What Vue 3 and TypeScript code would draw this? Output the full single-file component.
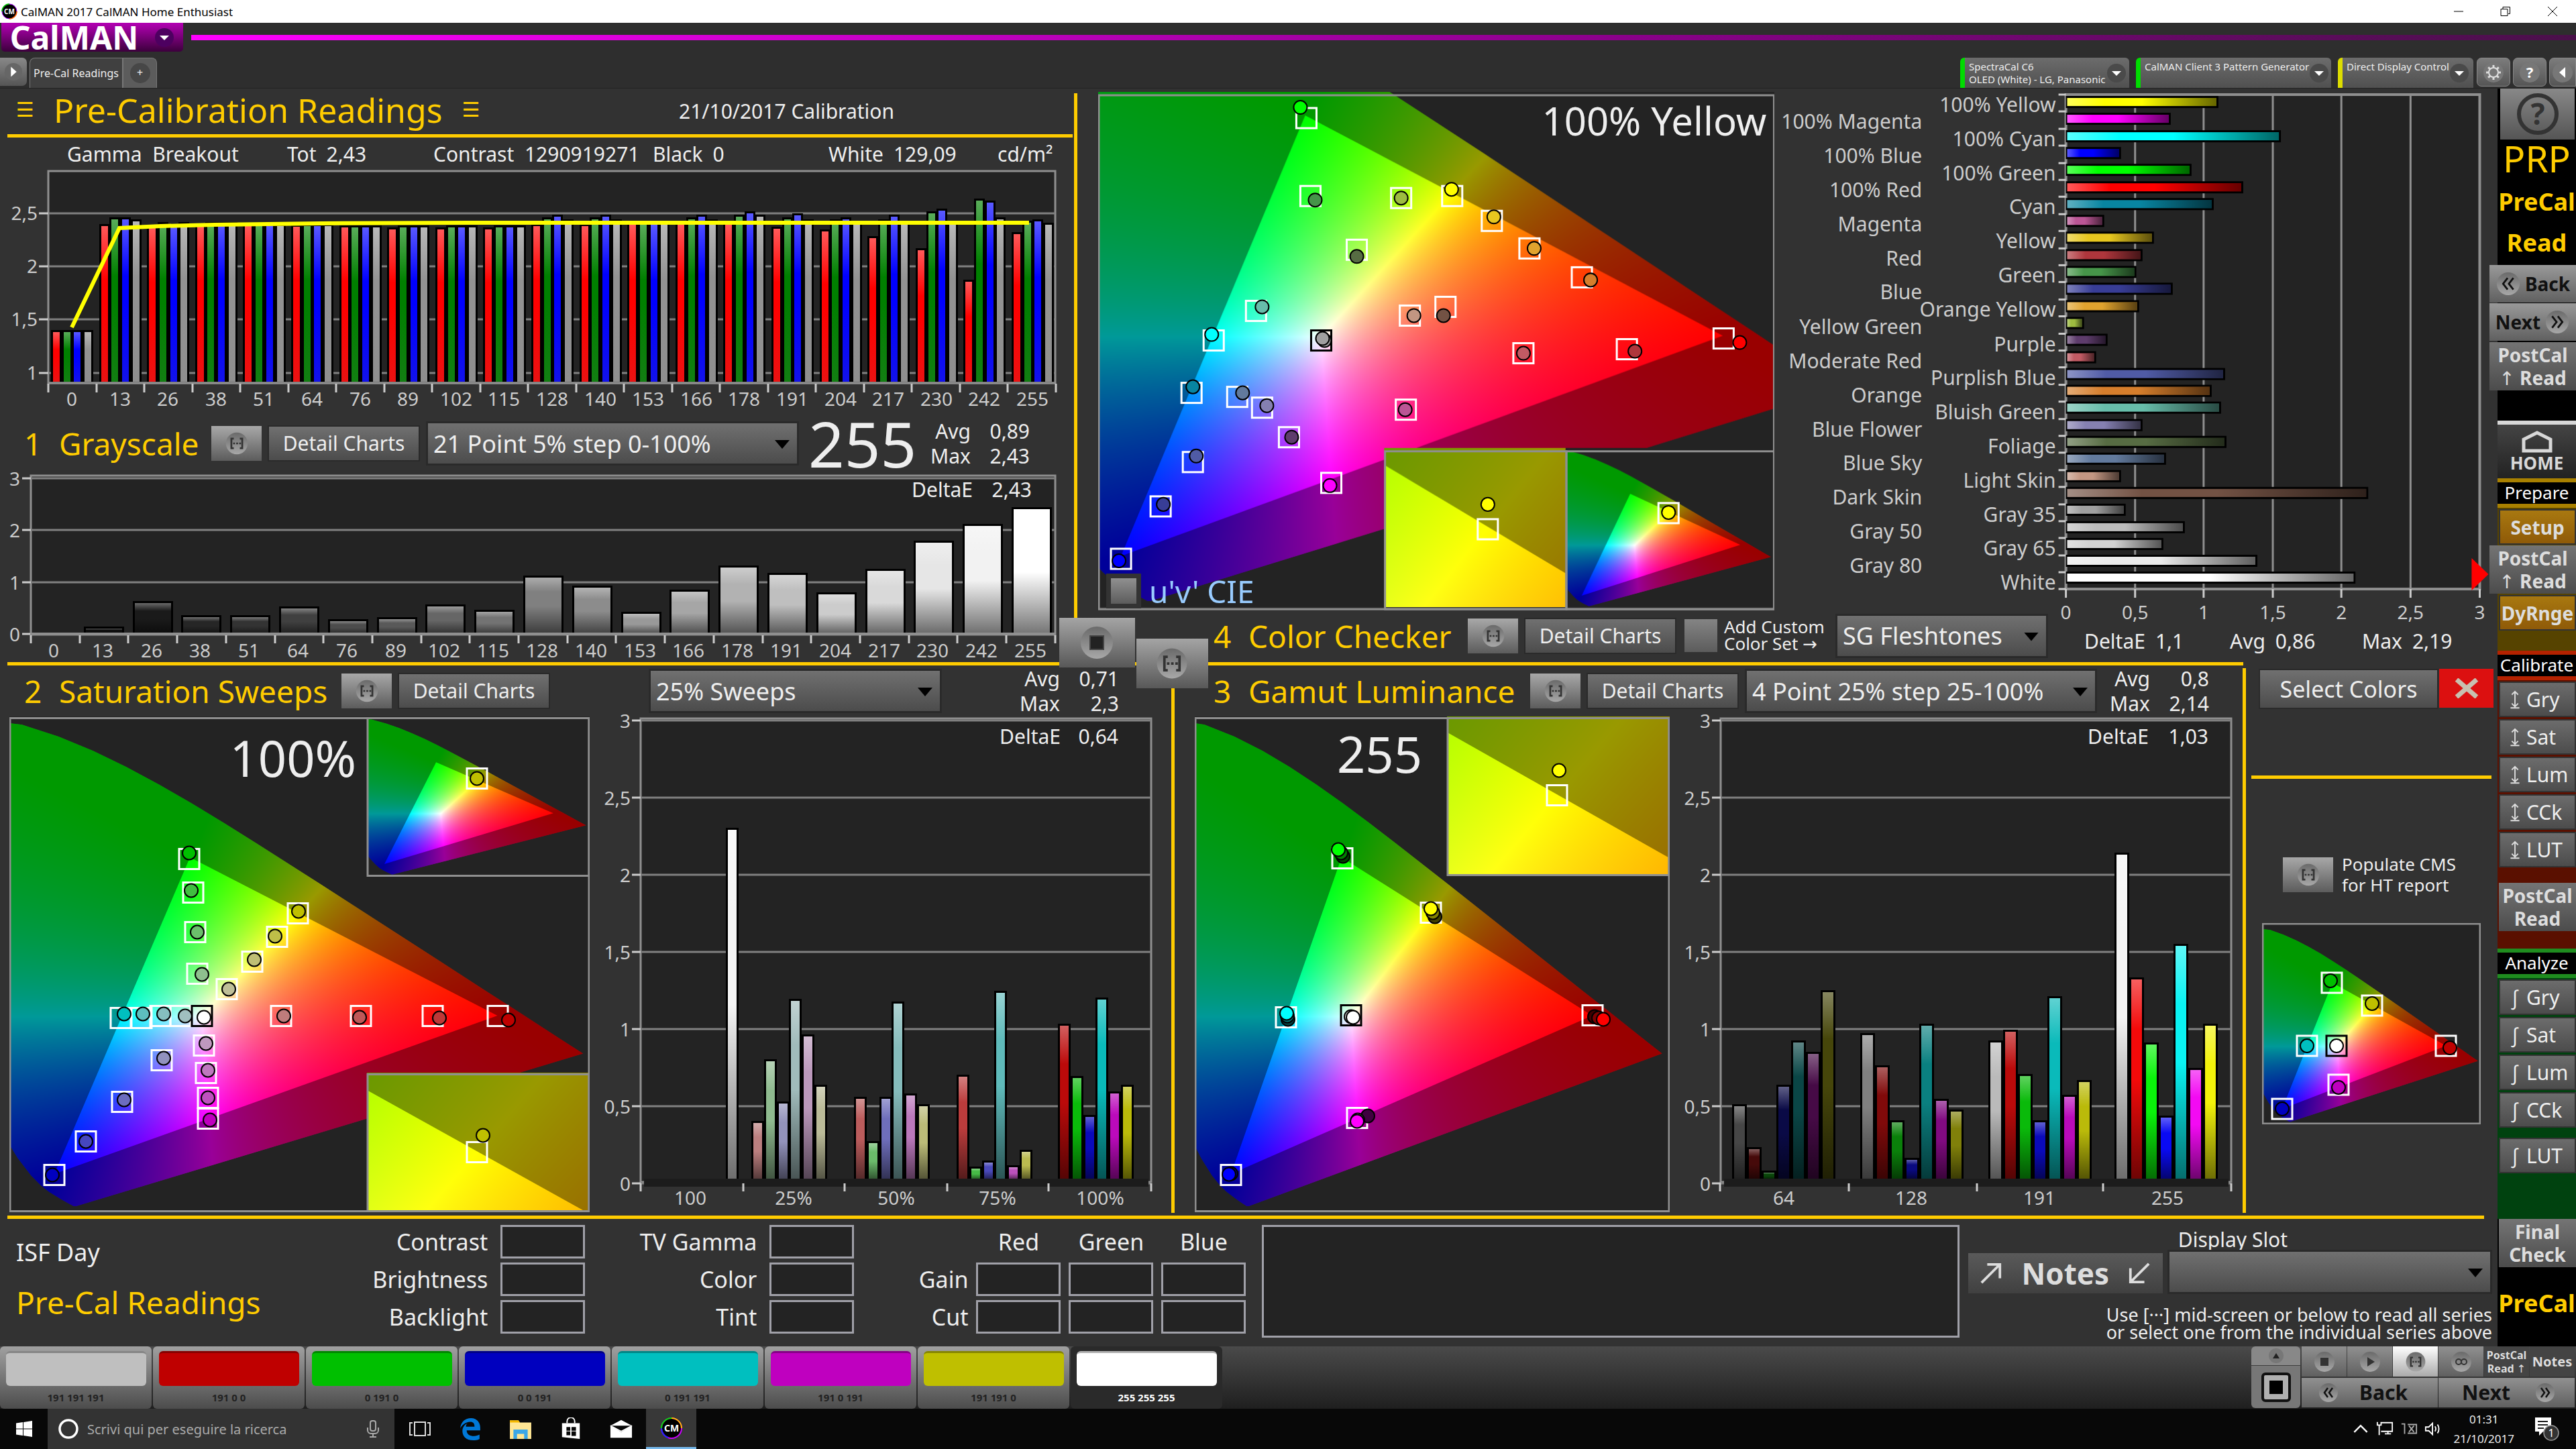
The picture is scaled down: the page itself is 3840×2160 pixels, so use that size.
<script setup lang="ts">
import { defineComponent, h, onMounted, ref } from 'vue'
import type { PropType } from 'vue'

/* ---------- chromaticity diagrams ---------- */
type Point = [number, number]
type Dot = [number, number, string]
interface Field { x: number; y: number; w: number; h: number; at: Point; xy: Point; sx: number; sy: number }
interface Plot { w: number; h: number; fields: Field[]; squares: Point[]; white?: Point; dots: Dot[] }

const BLUE: Point = [0.15, 0.06]
const YELLOW: Point = [0.4193, 0.5053]
const GAMUT: Point[] = [[0.64, 0.33], [0.3, 0.6], BLUE]
const LOCUS: Point[] = [
  [0.1741, 0.005], [0.1714, 0.0051], [0.1644, 0.0109], [0.1566, 0.0177], [0.144, 0.0297], [0.1355, 0.0399],
  [0.1241, 0.0578], [0.1096, 0.0868], [0.0913, 0.1327], [0.0687, 0.2007], [0.0454, 0.295], [0.0235, 0.4127],
  [0.0082, 0.5384], [0.0039, 0.6548], [0.0139, 0.7502], [0.0389, 0.812], [0.0743, 0.8338], [0.1142, 0.8262],
  [0.1547, 0.8059], [0.1929, 0.7816], [0.2296, 0.7543], [0.2658, 0.7243], [0.3016, 0.6923], [0.3373, 0.6589],
  [0.3731, 0.6245], [0.4441, 0.5547], [0.5125, 0.4866], [0.5752, 0.4242], [0.627, 0.3725], [0.6658, 0.334],
  [0.6915, 0.3083], [0.719, 0.2809], [0.7347, 0.2653],
]

function paintField(ctx: CanvasRenderingContext2D, f: Field) {
  const off = document.createElement('canvas')
  off.width = f.w
  off.height = f.h
  const octx = off.getContext('2d')!
  const img = octx.createImageData(f.w, f.h)
  const d = img.data
  for (let j = 0; j < f.h; j++) {
    const y = Math.max(0.001, f.xy[1] + (f.at[1] - (f.y + j)) / f.sy)
    for (let i = 0; i < f.w; i++) {
      const x = f.xy[0] + (f.x + i - f.at[0]) / f.sx
      const X = x / y
      const Z = (1 - x - y) / y
      const r = Math.max(0, 3.2406 * X - 1.5372 - 0.4986 * Z)
      const g = Math.max(0, -0.9689 * X + 1.8758 + 0.0415 * Z)
      const b = Math.max(0, 0.0557 * X - 0.204 + 1.057 * Z)
      const m = Math.max(r, g, b) || 1
      const k = (j * f.w + i) * 4
      d[k] = (255 * r) / m
      d[k + 1] = (255 * g) / m
      d[k + 2] = (255 * b) / m
      d[k + 3] = 255
    }
  }
  octx.putImageData(img, 0, 0)
  const trace = (pts: Point[]) => {
    ctx.beginPath()
    pts.forEach(([px, py], n) => {
      const cx = f.at[0] + (px - f.xy[0]) * f.sx
      const cy = f.at[1] - (py - f.xy[1]) * f.sy
      if (n) ctx.lineTo(cx, cy)
      else ctx.moveTo(cx, cy)
    })
    ctx.closePath()
  }
  ctx.save()
  ctx.beginPath()
  ctx.rect(f.x, f.y, f.w, f.h)
  ctx.clip()
  ctx.fillStyle = '#232323'
  ctx.fillRect(f.x, f.y, f.w, f.h)
  ctx.save()
  trace(LOCUS)
  ctx.clip()
  ctx.drawImage(off, f.x, f.y)
  ctx.fillStyle = 'rgba(0,0,0,0.4)'
  ctx.fillRect(f.x, f.y, f.w, f.h)
  ctx.restore()
  trace(GAMUT)
  ctx.clip()
  ctx.drawImage(off, f.x, f.y)
  ctx.restore()
}

const CiePlot = defineComponent({
  props: { plot: { type: Object as PropType<Plot>, required: true } },
  setup(props, { slots }) {
    const el = ref<HTMLCanvasElement | null>(null)
    onMounted(() => {
      const ctx = el.value?.getContext('2d')
      if (ctx) props.plot.fields.forEach((f) => paintField(ctx, f))
    })
    return () => {
      const p = props.plot
      const square = (c: Point, stroke: string) =>
        h('rect', { x: c[0] - 15, y: c[1] - 15, width: 30, height: 30, fill: 'none', stroke, 'stroke-width': 3 })
      return h('div', { class: 'cie' }, [
        h('canvas', { ref: el, width: p.w, height: p.h, class: 'cie-canvas' }),
        h('svg', { viewBox: `0 0 ${p.w} ${p.h}`, class: 'cie-marks' }, [
          ...p.fields.map((f) => h('rect', { x: f.x + 1, y: f.y + 1, width: f.w - 2, height: f.h - 2, fill: 'none', stroke: '#8f8f8f', 'stroke-width': 3 })),
          ...p.squares.map((s) => square(s, '#fff')),
          p.white ? square(p.white, '#000') : null,
          ...p.dots.map(([x, y, c]) => h('circle', { cx: x, cy: y, r: 10, fill: c, stroke: '#000', 'stroke-width': 2 })),
        ]),
        slots.default ? slots.default() : null,
      ])
    }
  },
})

const checkerPlot: Plot = {
  w: 1007, h: 767,
  fields: [
    { x: 0, y: 0, w: 1007, h: 767, at: [34, 691], xy: BLUE, sx: 1829, sy: 1215 },
    { x: 426, y: 530, w: 272, h: 237, at: [580, 647], xy: YELLOW, sx: 6300, sy: 4740 },
    { x: 696, y: 530, w: 311, h: 237, at: [720, 750], xy: BLUE, sx: 482, sy: 281 },
  ],
  squares: [[310, 35], [316, 151], [451, 154], [527, 151], [586, 188], [642, 229], [720, 272], [385, 231], [235, 322], [172, 366], [464, 329], [517, 316], [633, 385], [787, 379], [931, 363], [139, 444], [207, 450], [244, 466], [458, 469], [284, 510], [141, 547], [347, 578], [93, 613], [34, 691], [580, 647], [849, 623]],
  white: [332, 366],
  dots: [[301, 19, '#0f0'], [323, 157, '#469449'], [451, 154, '#9dbc40'], [526, 141, '#ff0'], [589, 182, '#e7c71f'], [649, 229, '#e0a32e'], [733, 276, '#d67e2c'], [385, 241, '#576c43'], [244, 316, '#67bdaa'], [169, 357, '#0ff'], [470, 329, '#c29682'], [514, 329, '#735244'], [633, 385, '#c15a63'], [799, 382, '#af363c'], [955, 369, '#f00'], [141, 435, '#0885a1'], [215, 444, '#627a9d'], [251, 463, '#8580b1'], [457, 469, '#bb5695'], [288, 510, '#5e3c6c'], [146, 538, '#505ba6'], [345, 582, '#f0f'], [97, 610, '#383d96'], [31, 694, '#00f'], [337, 366, '#999'], [334, 363, '#a0a0a0'], [580, 610, '#ff0'], [849, 622, '#ff0']],
}
const sweepPlot: Plot = {
  w: 865, h: 737,
  fields: [
    { x: 0, y: 0, w: 865, h: 737, at: [67, 682], xy: BLUE, sx: 1348, sy: 874 },
    { x: 533, y: 0, w: 332, h: 237, at: [559, 220], xy: BLUE, sx: 514, sy: 281 },
    { x: 533, y: 531, w: 332, h: 206, at: [697, 648], xy: YELLOW, sx: 6750, sy: 4725 },
  ],
  squares: [[268, 211], [274, 261], [277, 320], [280, 382], [430, 292], [399, 327], [362, 364], [324, 405], [166, 448], [197, 448], [225, 445], [255, 445], [405, 445], [524, 445], [631, 445], [728, 445], [227, 511], [290, 489], [293, 530], [296, 567], [296, 598], [168, 573], [114, 632], [67, 682], [697, 91], [697, 648]],
  white: [287, 445],
  dots: [[268, 202, '#00bf00'], [271, 258, '#40bf40'], [280, 320, '#6bbf6b'], [287, 383, '#8ebf8e'], [431, 289, '#bfbf00'], [396, 326, '#bfbf48'], [365, 361, '#bfbf75'], [327, 405, '#bfbf98'], [171, 442, '#00bfbf'], [199, 442, '#5dbfbf'], [230, 442, '#85bfbf'], [262, 445, '#a0bfbf'], [290, 447, '#fff'], [409, 445, '#bf7c7c'], [522, 447, '#bf5858'], [641, 448, '#bf3838'], [744, 451, '#bf0000'], [230, 508, '#9292bf'], [293, 486, '#bf98bf'], [296, 526, '#bf78bf'], [296, 567, '#bf50bf'], [299, 600, '#bf00bf'], [171, 570, '#6c6cbf'], [114, 632, '#4646bf'], [64, 682, '#0000bf'], [697, 91, '#bfbf00'], [706, 623, '#bfbf00']],
}
const gamutPlot: Plot = {
  w: 708, h: 737,
  fields: [
    { x: 0, y: 0, w: 708, h: 737, at: [54, 682], xy: BLUE, sx: 1099, sy: 874 },
    { x: 376, y: 0, w: 332, h: 236, at: [540, 116], xy: YELLOW, sx: 6750, sy: 4810 },
  ],
  squares: [[220, 210], [352, 291], [136, 447], [593, 444], [242, 597], [54, 682], [540, 116]],
  white: [233, 444],
  dots: [[221, 207, '#004000'], [218, 202, '#008000'], [214, 197, '#0f0'], [358, 297, '#404000'], [355, 291, '#808000'], [352, 285, '#ff0'], [139, 450, '#004040'], [138, 445, '#008080'], [137, 441, '#0ff'], [596, 446, '#400000'], [602, 448, '#800000'], [609, 450, '#f00'], [258, 594, '#400040'], [243, 600, '#fff'], [242, 602, '#f0f'], [54, 680, '#000080'], [51, 681, '#00f'], [233, 446, '#fff'], [236, 447, '#fff'], [543, 79, '#ff0']],
}
const cmsPlot: Plot = {
  w: 326, h: 300,
  fields: [{ x: 0, y: 0, w: 326, h: 300, at: [30, 277], xy: BLUE, sx: 499, sy: 348 }],
  squares: [[104, 89], [164, 123], [67, 183], [274, 183], [114, 241], [30, 277]],
  white: [111, 183],
  dots: [[102, 86, '#00bf00'], [164, 120, '#bfbf00'], [67, 183, '#00bfbf'], [280, 186, '#bf0000'], [114, 245, '#bf00bf'], [30, 277, '#0000bf'], [111, 183, '#fff']],
}

/* ---------- bar charts ---------- */
const levels = [0, 13, 26, 38, 51, 64, 76, 89, 102, 115, 128, 140, 153, 166, 178, 191, 204, 217, 230, 242, 255]
const gamma: number[][] = [
  [1.4, 1.4, 1.4, 1.4], [2.4, 2.46, 2.46, 2.44], [2.38, 2.42, 2.39, 2.42], [2.39, 2.42, 2.42, 2.42], [2.4, 2.41, 2.4, 2.4],
  [2.39, 2.4, 2.4, 2.4], [2.385, 2.385, 2.385, 2.385], [2.365, 2.385, 2.385, 2.385], [2.365, 2.385, 2.385, 2.385],
  [2.365, 2.385, 2.385, 2.385], [2.4, 2.46, 2.485, 2.44], [2.4, 2.46, 2.485, 2.44], [2.41, 2.41, 2.41, 2.41],
  [2.41, 2.46, 2.485, 2.44], [2.41, 2.485, 2.52, 2.485], [2.37, 2.46, 2.5, 2.44], [2.345, 2.44, 2.46, 2.41],
  [2.285, 2.44, 2.485, 2.41], [2.17, 2.52, 2.54, 2.42], [1.875, 2.64, 2.62, 2.46], [2.325, 2.43, 2.44, 2.41],
]
const rgbw = ['#f00', '#008000', '#00f', '#929292']
const gammaBars = gamma.flatMap((g, i) => g.map((v, c) => {
  const y = Math.round(305 - (v - 1) * 158.8)
  return { x: Math.round(76 + i * 71.6 + c * 15.7), y, h: 318 - y, fill: rgbw[c] }
}))
const gammaGrid = [{ y: 67, t: '2,5' }, { y: 146, t: '2' }, { y: 225, t: '1,5' }, { y: 305, t: '1' }]

const gray = [0, 0.16, 0.65, 0.37, 0.37, 0.54, 0.29, 0.33, 0.58, 0.48, 1.13, 0.94, 0.44, 0.86, 1.33, 1.18, 0.81, 1.26, 1.81, 2.13, 2.45]
const grayBars = gray.map((v, i) => {
  const hgt = Math.round(v * 77.6)
  return { x: Math.round(52 + i * 72.8), y: 240 - hgt, h: hgt, fill: `rgb(${levels[i]},${levels[i]},${levels[i]})` }
}).filter((b) => b.h > 0)
const grayGrid = [{ y: 7, t: '3' }, { y: 84, t: '2' }, { y: 162, t: '1' }, { y: 239, t: '0' }]

const checker: [string, number, string][] = [
  ['100% Yellow', 1.105, '#ff0'], ['100% Magenta', 0.76, '#f0f'], ['100% Cyan', 1.56, '#0ff'], ['100% Blue', 0.4, '#00f'],
  ['100% Green', 0.91, '#0f0'], ['100% Red', 1.29, '#f00'], ['Cyan', 1.075, '#0885a1'], ['Magenta', 0.28, '#bb5695'],
  ['Yellow', 0.64, '#e7c71f'], ['Red', 0.555, '#af363c'], ['Green', 0.51, '#469449'], ['Blue', 0.775, '#383d96'],
  ['Orange Yellow', 0.53, '#e0a32e'], ['Yellow Green', 0.13, '#9dbc40'], ['Purple', 0.3, '#5e3c6c'], ['Moderate Red', 0.22, '#c15a63'],
  ['Purplish Blue', 1.155, '#505ba6'], ['Orange', 1.06, '#d67e2c'], ['Bluish Green', 1.125, '#67bdaa'], ['Blue Flower', 0.555, '#8580b1'],
  ['Foliage', 1.165, '#576c43'], ['Blue Sky', 0.725, '#627a9d'], ['Light Skin', 0.4, '#c29682'], ['Dark Skin', 2.195, '#735244'],
  ['Gray 35', 0.435, '#a0a0a0'], ['Gray 50', 0.865, '#bcbcbc'], ['Gray 65', 0.705, '#d2d2d2'], ['Gray 80', 1.39, '#ebebeb'], ['White', 2.1, '#fff'],
]
const checkerRows = checker.map(([t, v, fill], i) => ({
  t, fill, y: Math.round(11 + i * 25.3), w: Math.round(v * 205), lx: i % 2 ? 220 : 419, ly: Math.round(35 + i * 25.4), ty: Math.round(9 + i * 25.4),
}))
const checkerAxis = ['0', '0,5', '1', '1,5', '2', '2,5', '3'].map((t, i) => ({ t, x: Math.round(434 + i * 102.6) }))

const deltaGrid = ['3', '2,5', '2', '1,5', '1', '0,5', '0'].map((t, i) => ({ t, y: Math.round(6 + i * 115) }))
const groups = (start: number[], pitch: number, values: number[][], colors: string[][]) =>
  values.flatMap((vs, g) => vs.map((v, i) => {
    const y = Math.round(695 - v * 230)
    return { x: Math.round(start[g] + i * pitch), y, h: 690 - y, fill: colors[g][i] }
  }))
const sweepBars = groups([193, 231, 384, 537, 688], 18.8,
  [[2.3], [0.4, 0.8, 0.525, 1.19, 0.96, 0.635], [0.555, 0.27, 0.555, 1.175, 0.58, 0.51], [0.7, 0.105, 0.145, 1.245, 0.115, 0.215], [1.03, 0.69, 0.44, 1.2, 0.59, 0.635]],
  [['#f4f4f4'], ['#bb7f7f', '#8fbb8f', '#9292bb', '#a0bbbb', '#bb98bb', '#bbbb98'], ['#bb5c5c', '#6bbb6b', '#6e6ebb', '#85bbbb', '#bb78bb', '#bbbb78'],
    ['#bb3c3c', '#46bb46', '#4a4abb', '#5fbbbb', '#bb50bb', '#bbbb50'], ['#bb0a0a', '#0abb0a', '#0a0abb', '#0abbbb', '#bb0abb', '#bbbb0a']])
const sweepTicks = [66, 219, 370, 523, 674, 827]
const sweepLabels = [{ x: 140, t: '100' }, { x: 294, t: '25%' }, { x: 447, t: '50%' }, { x: 598, t: '75%' }, { x: 751, t: '100%' }]

const ramp = (n: number) => [[n, n, n], [n, 10, 10], [10, n, 10], [10, 10, n], [10, n, n], [n, 10, n], [n, n, 10]].map((c) => `rgb(${c})`)
const gamutBars = groups([93, 284, 475, 663], 22,
  [[0.51, 0.23, 0.08, 0.635, 0.92, 0.85, 1.25], [0.97, 0.76, 0.405, 0.16, 1.03, 0.545, 0.475], [0.92, 0.99, 0.705, 0.405, 1.21, 0.57, 0.665], [2.14, 1.33, 0.91, 0.435, 1.55, 0.745, 1.03]],
  [ramp(70), ramp(128), ramp(186), ramp(243)])
const gamutTicks = [75, 267, 458, 646, 837]
const gamutLabels = [{ x: 170, t: '64' }, { x: 360, t: '128' }, { x: 551, t: '191' }, { x: 742, t: '255' }]

/* ---------- bottom strip ---------- */
const swatches = [
  { c: '#bfbfbf', t: '191 191 191' }, { c: '#bf0000', t: '191 0 0' }, { c: '#00bf00', t: '0 191 0' }, { c: '#0000bf', t: '0 0 191' },
  { c: '#00bfbf', t: '0 191 191' }, { c: '#bf00bf', t: '191 0 191' }, { c: '#bfbf00', t: '191 191 0' }, { c: '#ffffff', t: '255 255 255' },
]
const selected = ref(7)
const series = ['Gry', 'Sat', 'Lum', 'CCk', 'LUT']
</script>

<template>
  <div class="app">
    <svg class="defs" aria-hidden="true">
      <defs>
        <linearGradient id="shadeV" x1="0" y1="0" x2="0" y2="1">
          <stop offset="0" stop-color="#fff" stop-opacity=".35" /><stop offset=".25" stop-color="#fff" stop-opacity="0" />
          <stop offset=".5" stop-color="#000" stop-opacity="0" /><stop offset="1" stop-color="#000" stop-opacity=".55" />
        </linearGradient>
        <linearGradient id="shadeH" x1="0" y1="0" x2="1" y2="0">
          <stop offset="0" stop-color="#fff" stop-opacity=".35" /><stop offset=".25" stop-color="#fff" stop-opacity="0" />
          <stop offset=".5" stop-color="#000" stop-opacity="0" /><stop offset="1" stop-color="#000" stop-opacity=".6" />
        </linearGradient>
        <linearGradient id="shadeG" x1="0" y1="0" x2="0" y2="1">
          <stop offset="0" stop-color="#fff" stop-opacity=".35" /><stop offset=".35" stop-color="#fff" stop-opacity="0" />
          <stop offset=".5" stop-color="#777" stop-opacity="0" /><stop offset="1" stop-color="#777" stop-opacity=".15" />
        </linearGradient>
        <linearGradient id="disc" x1="0" y1="0" x2="0" y2="1">
          <stop offset="0" stop-color="#6a6a6a" /><stop offset="1" stop-color="#a8a8a8" />
        </linearGradient>
        <symbol id="range" viewBox="0 0 40 40">
          <circle cx="20" cy="20" r="18" fill="url(#disc)" />
          <path d="M15 12h-4v16h4M25 12h4v16h-4" fill="none" stroke="#333" stroke-width="3" />
          <path d="M14 20h3M19 20h3M24 20h3" stroke="#333" stroke-width="3" />
        </symbol>
        <symbol id="updown" viewBox="0 0 16 32">
          <path d="M8 3v24M3 8l5-5 5 5M3 22l5 5 5-5M1 29h14" fill="none" stroke="#ddd" stroke-width="2" />
        </symbol>
      </defs>
    </svg>

    <header class="titlebar">
      <svg class="cm-icon" viewBox="0 0 24 24"><circle cx="12" cy="12" r="11" fill="#000" stroke="#a0f" stroke-width="1" /><path d="M1 12A11 11 0 0 1 12 1" fill="none" stroke="#0c0" stroke-width="1.5" /><path d="M23 12A11 11 0 0 1 12 23" fill="none" stroke="#f60" stroke-width="1.5" /><text x="12" y="16" text-anchor="middle" font-size="10" font-weight="700" fill="#fff">CM</text></svg>
      <span class="win-title">CalMAN 2017 CalMAN Home Enthusiast</span>
      <span class="win-buttons">
        <button aria-label="Minimize"><svg viewBox="0 0 16 16"><path d="M1 8h14" stroke="#000" /></svg></button>
        <button aria-label="Restore"><svg viewBox="0 0 16 16"><path d="M1 4.500h10v10H1zM4 4V1.500h10.500v10H12" fill="none" stroke="#000" /></svg></button>
        <button aria-label="Close"><svg viewBox="0 0 16 16"><path d="M1 1l14 14M15 1L1 15" stroke="#000" /></svg></button>
      </span>
    </header>

    <div class="brandbar">
      <button class="brand">CalMAN<svg viewBox="0 0 30 30"><circle cx="15" cy="15" r="14" fill="#4d0060" /><path d="M8 12h14l-7 7z" fill="#fff" /></svg></button>
      <span class="brand-line"></span>
    </div>

    <div class="tabbar">
      <button class="expand" aria-label="Expand"><svg viewBox="0 0 32 32"><circle cx="16" cy="16" r="14" fill="#666" /><path d="M12 8l9 8-9 8z" fill="#fff" /></svg></button>
      <button class="tab">Pre-Cal Readings</button>
      <button class="tab add"><span>+</span></button>
      <span class="grow"></span>
      <button class="device meter"><span>SpectraCal C6<br />OLED (White) - LG, Panasonic</span><svg viewBox="0 0 30 30"><circle cx="15" cy="15" r="14" fill="#4a4a4a" /><path d="M8 12h14l-7 7z" fill="#fff" /></svg></button>
      <button class="device source"><span>CalMAN Client 3 Pattern Generator</span><svg viewBox="0 0 30 30"><circle cx="15" cy="15" r="14" fill="#4a4a4a" /><path d="M8 12h14l-7 7z" fill="#fff" /></svg></button>
      <button class="device display"><span>Direct Display Control</span><svg viewBox="0 0 30 30"><circle cx="15" cy="15" r="14" fill="#4a4a4a" /><path d="M8 12h14l-7 7z" fill="#fff" /></svg></button>
      <button class="tool" aria-label="Settings"><svg viewBox="0 0 32 32"><circle cx="16" cy="16" r="15" fill="#777" /><circle cx="16" cy="16" r="7" fill="none" stroke="#ddd" stroke-width="2" /><g stroke="#ddd" stroke-width="3"><path v-for="a in 8" :key="a" d="M16 5v3.500" :transform="`rotate(${a * 45} 16 16)`" /></g></svg></button>
      <button class="tool" aria-label="Help"><svg viewBox="0 0 32 32"><circle cx="16" cy="16" r="15" fill="#777" /><text x="16" y="24" text-anchor="middle" font-size="22" font-weight="700" fill="#fff">?</text></svg></button>
      <button class="tool last" aria-label="Collapse"><svg viewBox="0 0 32 32"><circle cx="16" cy="16" r="15" fill="#777" /><path d="M20 8l-9 8 9 8z" fill="#fff" /></svg></button>
    </div>

    <div class="work">
      <main class="main">
        <section class="top">
          <div class="gray-panel">
            <div class="titlerow"><h1><span class="burger">☰</span>Pre-Calibration Readings<span class="burger">☰</span></h1><span class="session">21/10/2017 Calibration</span></div>
            <div class="rule left"></div>
            <div class="facts">
              <span>Gamma&nbsp; Breakout</span><span>Tot&ensp;2,43</span><span class="contrast">Contrast&nbsp; 1290919271</span><span>Black&ensp;0</span><span>White&ensp;129,09</span><span>cd/m²</span>
            </div>
            <svg class="chart" viewBox="0 0 1601 370">
              <rect x="72" y="4" width="1501" height="316" fill="#232323" stroke="#8f8f8f" stroke-width="3" />
              <g v-for="g in gammaGrid" :key="g.t"><path :d="`M72 ${g.y}H1573`" stroke="#808080" stroke-width="3" /><path :d="`M58 ${g.y}H72`" stroke="#ccc" stroke-width="3" /><text x="56" :y="g.y + 10" text-anchor="end">{{ g.t }}</text></g>
              <g v-for="(b, i) in gammaBars" :key="i"><rect :x="b.x" :y="b.y" width="16" :height="b.h" fill="#000" /><rect :x="b.x + 3" :y="b.y + 3" width="10" :height="b.h - 3" :fill="b.fill" /><rect :x="b.x + 3" :y="b.y + 3" width="10" :height="b.h - 3" fill="url(#shadeG)" /></g>
              <path d="M107 237L178 89 240 86 320 84 480 82 700 81 1534 81" fill="none" stroke="#ff0" stroke-width="6" />
              <path d="M72 320H1574" stroke="#8f8f8f" stroke-width="3" />
              <path v-for="i in 22" :key="i" :d="`M${Math.round(72 + (i - 1) * 71.5)} 321v13`" stroke="#ccc" stroke-width="3" />
              <text v-for="(l, i) in levels" :key="l" :x="Math.round(107 + i * 71.6)" y="354" text-anchor="middle">{{ l }}</text>
            </svg>
            <div class="head">
              <h2 class="w-gray"><b>1</b>Grayscale</h2>
              <button class="icon-btn" aria-label="Read series"><svg><use href="#range" /></svg></button>
              <button class="btn">Detail Charts</button>
              <span class="select gray-select"><select aria-label="Grayscale series"><option>21 Point 5% step 0-100%</option></select></span>
              <span class="level">255</span>
              <span class="stats"><i>Avg</i><i>0,89</i><i>Max</i><i>2,43</i></span>
            </div>
            <svg class="chart" viewBox="0 0 1601 281">
              <rect x="46" y="3" width="1527" height="237" fill="#232323" stroke="#8f8f8f" stroke-width="3" />
              <g v-for="g in grayGrid" :key="g.t"><path :d="`M46 ${g.y}H1573`" stroke="#808080" stroke-width="3" /><path :d="`M33 ${g.y}H46`" stroke="#ccc" stroke-width="3" /><text x="30" :y="g.y + 11" text-anchor="end">{{ g.t }}</text></g>
              <g v-for="(b, i) in grayBars" :key="i"><rect :x="b.x" :y="b.y" width="60" :height="b.h" fill="#000" /><rect :x="b.x + 3" :y="b.y + 3" width="54" :height="b.h - 3" :fill="b.fill" /><rect :x="b.x + 3" :y="b.y + 3" width="54" :height="b.h - 3" fill="url(#shadeV)" /></g>
              <path d="M45 239H1574" stroke="#8f8f8f" stroke-width="4" />
              <path v-for="i in 22" :key="i" :d="`M${Math.round(46 + (i - 1) * 72.7)} 241v12`" stroke="#ccc" stroke-width="3" />
              <text v-for="(l, i) in levels" :key="l" :x="Math.round(80 + i * 72.8)" y="274" text-anchor="middle">{{ l }}</text>
              <text class="bright" x="1450" y="35" text-anchor="end">DeltaE</text><text class="bright" x="1538" y="35" text-anchor="end">2,43</text>
            </svg>
          </div>
          <div class="vrule first"></div>
          <div class="checker-panel">
            <div class="checker-body">
              <CiePlot :plot="checkerPlot"><span class="plot-title">100% Yellow</span><label class="uv"><input type="checkbox" /><span>u'v' CIE</span></label></CiePlot>
              <svg class="chart checker-chart" viewBox="0 0 1076 780">
                <rect x="434" y="9" width="616" height="736" fill="#232323" stroke="#8f8f8f" stroke-width="4" />
                <g v-for="a in checkerAxis" :key="a.t"><path :d="`M${a.x} 9V745`" stroke="#8f8f8f" stroke-width="3" /><path :d="`M${a.x} 745v13`" stroke="#ccc" stroke-width="3" /><text :x="a.x" y="790" text-anchor="middle" class="small">{{ a.t }}</text></g>
                <g v-for="r in checkerRows" :key="r.y"><text :x="r.lx" :y="r.ly" text-anchor="end">{{ r.t }}</text><path :d="`M423 ${r.ty}h11`" stroke="#ccc" stroke-width="3" /><rect x="434" :y="r.y" :width="r.w" height="18" fill="#000" /><rect x="436" :y="r.y + 3" :width="r.w - 5" height="12" :fill="r.fill" /><rect x="436" :y="r.y + 3" :width="r.w - 5" height="12" fill="url(#shadeH)" /></g>
                <path d="M423 745h11" stroke="#ccc" stroke-width="3" />
                <path d="M1038 699l25 24-25 24z" fill="#f00" />
              </svg>
            </div>
            <div class="head checker-head">
              <h2 class="w-checker"><b>4</b>Color Checker</h2>
              <button class="icon-btn" aria-label="Read series"><svg><use href="#range" /></svg></button>
              <button class="btn">Detail Charts</button>
              <button class="mini-btn" aria-label="Add custom color set"></button>
              <span class="custom">Add Custom<br />Color Set <span class="arrow">→</span></span>
              <span class="select flesh-select"><select aria-label="Custom color set"><option>SG Fleshtones</option></select></span>
              <span class="line-stats"><span>DeltaE&ensp;1,1</span><span>Avg&ensp;0,86</span><span>Max&ensp;2,19</span></span>
            </div>
          </div>
        </section>

        <div class="rule mid"></div>

        <section class="bottom">
          <div class="pane">
            <div class="head">
              <h2 class="w-sat"><b>2</b>Saturation Sweeps</h2>
              <button class="icon-btn" aria-label="Read series"><svg><use href="#range" /></svg></button>
              <button class="btn">Detail Charts</button>
              <span class="grow"></span>
              <span class="select sweep-select"><select aria-label="Sweep series"><option>25% Sweeps</option></select></span>
              <span class="stats sweep-stats"><i>Avg</i><i>0,71</i><i>Max</i><i>2,3</i></span>
            </div>
            <div class="pane-body sweep-body">
              <CiePlot :plot="sweepPlot"><span class="plot-title sweep">100%</span></CiePlot>
              <svg class="chart" viewBox="0 0 857 740">
                <rect x="66" y="3" width="761" height="691" fill="#232323" stroke="#8f8f8f" stroke-width="3" />
                <g v-for="g in deltaGrid" :key="g.t"><path :d="`M66 ${g.y}H827`" stroke="#808080" stroke-width="3" /><path :d="`M53 ${g.y}H66`" stroke="#ccc" stroke-width="3" /><text x="51" :y="g.y + 11" text-anchor="end">{{ g.t }}</text></g>
                <g v-for="(b, i) in sweepBars" :key="i"><rect :x="b.x" :y="b.y" width="19" :height="b.h" fill="#000" /><rect :x="b.x + 3" :y="b.y + 3" width="13" :height="b.h - 3" :fill="b.fill" /><rect :x="b.x + 3" :y="b.y + 3" width="13" :height="b.h - 3" fill="url(#shadeV)" /></g>
                <rect x="71" y="689" width="752" height="12" fill="#1c1c1c" />
                <path v-for="x in sweepTicks" :key="x" :d="`M${x} 696v12`" stroke="#ccc" stroke-width="3" />
                <text v-for="l in sweepLabels" :key="l.t + l.x" :x="l.x" y="728" text-anchor="middle">{{ l.t }}</text>
                <text class="bright" x="692" y="41" text-anchor="end">DeltaE</text><text class="bright" x="778" y="41" text-anchor="end">0,64</text>
              </svg>
            </div>
          </div>
          <div class="vrule"></div>
          <div class="pane">
            <div class="head">
              <h2 class="w-gamut"><b>3</b>Gamut Luminance</h2>
              <button class="icon-btn" aria-label="Read series"><svg><use href="#range" /></svg></button>
              <button class="btn">Detail Charts</button>
              <span class="select gamut-select"><select aria-label="Gamut series"><option>4 Point 25% step 25-100%</option></select></span>
              <span class="grow"></span>
              <span class="stats gamut-stats"><i>Avg</i><i>0,8</i><i>Max</i><i>2,14</i></span>
            </div>
            <div class="pane-body gamut-body">
              <CiePlot :plot="gamutPlot"><span class="plot-title gamut">255</span></CiePlot>
              <svg class="chart" viewBox="0 0 854 740">
                <rect x="76" y="3" width="761" height="691" fill="#232323" stroke="#8f8f8f" stroke-width="3" />
                <g v-for="g in deltaGrid" :key="g.t"><path :d="`M76 ${g.y}H837`" stroke="#808080" stroke-width="3" /><path :d="`M63 ${g.y}H76`" stroke="#ccc" stroke-width="3" /><text x="61" :y="g.y + 11" text-anchor="end">{{ g.t }}</text></g>
                <g v-for="(b, i) in gamutBars" :key="i"><rect :x="b.x" :y="b.y" width="22" :height="b.h" fill="#000" /><rect :x="b.x + 3" :y="b.y + 3" width="16" :height="b.h - 3" :fill="b.fill" /><rect :x="b.x + 3" :y="b.y + 3" width="16" :height="b.h - 3" fill="url(#shadeV)" /></g>
                <rect x="81" y="689" width="752" height="12" fill="#1c1c1c" />
                <path v-for="x in gamutTicks" :key="x" :d="`M${x} 696v12`" stroke="#ccc" stroke-width="3" />
                <text v-for="l in gamutLabels" :key="l.t" :x="l.x" y="728" text-anchor="middle">{{ l.t }}</text>
                <text class="bright" x="714" y="41" text-anchor="end">DeltaE</text><text class="bright" x="803" y="41" text-anchor="end">1,03</text>
              </svg>
            </div>
          </div>
          <div class="vrule"></div>
          <div class="cms">
            <div class="cms-head"><button class="btn colors">Select Colors</button><button class="close" aria-label="Close"><svg viewBox="0 0 36 30"><path d="M3 2l30 26M33 2L3 28" stroke="#c8c0b0" stroke-width="7" /></svg></button></div>
            <div class="rule cms-rule"></div>
            <div class="cms-report"><button class="icon-btn" aria-label="Populate CMS"><svg><use href="#range" /></svg></button><span>Populate CMS<br />for HT report</span></div>
            <CiePlot :plot="cmsPlot" />
          </div>
        </section>

        <div class="rule low"></div>

        <section class="info">
          <div class="mode"><p>ISF Day</p><p class="gold">Pre-Cal Readings</p></div>
          <div class="form"><label for="f1">Contrast</label><input id="f1" /><label for="f2">Brightness</label><input id="f2" /><label for="f3">Backlight</label><input id="f3" /></div>
          <div class="form"><label for="f4">TV Gamma</label><input id="f4" /><label for="f5">Color</label><input id="f5" /><label for="f6">Tint</label><input id="f6" /></div>
          <div class="form rgb">
            <span></span><span class="col">Red</span><span class="col">Green</span><span class="col">Blue</span>
            <span>Gain</span><input aria-label="Red gain" /><input aria-label="Green gain" /><input aria-label="Blue gain" />
            <span>Cut</span><input aria-label="Red cut" /><input aria-label="Green cut" /><input aria-label="Blue cut" />
          </div>
          <textarea class="notes" aria-label="Notes"></textarea>
          <div class="slot">
            <button class="notes-btn"><svg viewBox="0 0 36 36"><path d="M3 33L32 4M12 4h20v22" fill="none" stroke="#ddd" stroke-width="4" /></svg>Notes<svg viewBox="0 0 36 36"><path d="M33 3L4 32M4 10v22h22" fill="none" stroke="#ddd" stroke-width="4" /></svg></button>
            <div class="slot-pick"><label for="slot">Display Slot</label><span class="select"><select id="slot"></select></span></div>
            <p>Use [···] mid-screen or below to read all series<br />or select one from the individual series above</p>
          </div>
        </section>

        <button class="float stop" aria-label="Stop"><svg viewBox="0 0 50 50"><circle cx="25" cy="25" r="24" fill="url(#disc)" /><rect x="15" y="15" width="20" height="20" fill="#222" stroke="#444" stroke-width="2" /></svg></button>
        <button class="float read" aria-label="Read all series"><svg><use href="#range" /></svg></button>
      </main>

      <aside class="side">
        <button class="help" aria-label="Help"><svg viewBox="0 0 64 64"><circle cx="32" cy="32" r="28" fill="none" stroke="#333" stroke-width="6" /><text x="32" y="48" text-anchor="middle" font-size="44" font-weight="700" fill="#333">?</text></svg></button>
        <div class="labels"><span class="prp">PRP</span><span>PreCal</span><span>Read</span></div>
        <button class="nav"><svg viewBox="0 0 40 40"><circle cx="20" cy="20" r="18" fill="url(#disc)" /><path d="M19 11l-7 9 7 9M28 11l-7 9 7 9" fill="none" stroke="#111" stroke-width="3" /></svg>Back</button>
        <button class="nav">Next<svg viewBox="0 0 40 40"><circle cx="20" cy="20" r="18" fill="url(#disc)" /><path d="M12 11l7 9-7 9M21 11l7 9-7 9" fill="none" stroke="#111" stroke-width="3" /></svg></button>
        <button class="post wide"><span>PostCal<br /><span class="arrow">↑</span> Read</span></button>
        <div class="gap"></div>
        <button class="home"><svg viewBox="0 0 48 34"><path d="M4 31V14L24 4l20 10v17z" fill="none" stroke="#d8d8d8" stroke-width="5" /></svg>HOME</button>
        <div class="group amber">Prepare</div>
        <div class="zone amber-zone"><button class="gold-btn">Setup</button><button class="post wide"><span>PostCal<br /><span class="arrow">↑</span> Read</span></button><button class="gold-btn">DyRnge</button></div>
        <div class="group red">Calibrate</div>
        <div class="zone red-zone"><button v-for="s in series" :key="s" class="item"><svg><use href="#updown" /></svg>{{ s }}</button><button class="post">PostCal<br />Read</button></div>
        <div class="group green">Analyze</div>
        <div class="zone green-zone"><button v-for="s in series" :key="s" class="item" :class="{ lut: s === 'LUT' }"><span>∫</span>{{ s }}</button></div>
        <button class="post final">Final<br />Check</button>
        <div class="tail">PreCal</div>
      </aside>
    </div>

    <footer class="strip">
      <button v-for="(s, i) in swatches" :key="s.t" class="swatch" :class="{ on: selected === i }" @click="selected = i"><span class="chip" :style="{ background: s.c }"></span>{{ s.t }}</button>
      <span class="grow"></span>
      <div class="shutter"><button aria-label="Up"><svg viewBox="0 0 24 24"><circle cx="12" cy="12" r="11" fill="#777" /><path d="M7 16l5-8 5 8z" fill="#222" /></svg></button><button aria-label="Pattern window" class="pattern"><svg viewBox="0 0 46 46"><rect x="3" y="3" width="40" height="40" rx="4" fill="#b0b0b0" stroke="#111" stroke-width="4" /><rect x="13" y="13" width="20" height="20" fill="#000" /></svg></button></div>
      <div class="transport">
        <button aria-label="Stop"><svg viewBox="0 0 32 32"><circle cx="16" cy="16" r="15" fill="url(#disc)" /><rect x="10" y="10" width="12" height="12" fill="#333" /></svg></button>
        <button aria-label="Play"><svg viewBox="0 0 32 32"><circle cx="16" cy="16" r="15" fill="url(#disc)" /><path d="M12 9l11 7-11 7z" fill="#333" /></svg></button>
        <button class="lit" aria-label="Read series"><svg><use href="#range" /></svg></button>
        <button aria-label="Continuous"><svg viewBox="0 0 32 32"><circle cx="16" cy="16" r="15" fill="url(#disc)" /><g fill="none" stroke="#333" stroke-width="2"><circle cx="12" cy="16" r="4" /><circle cx="20" cy="16" r="4" /></g></svg></button>
        <button class="dark"><span>PostCal<br />Read <span class="arrow">↑</span></span></button>
        <button class="dark big">Notes</button>
        <button class="step"><svg viewBox="0 0 32 32"><circle cx="16" cy="16" r="14" fill="url(#disc)" /><path d="M15 9l-5 7 5 7M22 9l-5 7 5 7" fill="none" stroke="#111" stroke-width="2.500" /></svg><span>Back</span></button>
        <button class="step next"><span>Next</span><svg viewBox="0 0 32 32"><circle cx="16" cy="16" r="14" fill="url(#disc)" /><path d="M10 9l5 7-5 7M17 9l5 7-5 7" fill="none" stroke="#111" stroke-width="2.500" /></svg></button>
      </div>
    </footer>

    <nav class="taskbar">
      <button class="task start" aria-label="Start"><svg viewBox="0 0 24 24"><path d="M0 3.500l10-1.400v9.400H0zM11 2l13-2v11.500H11zM0 12.500h10v9.400L0 20.500zM11 12.500h13V24l-13-2z" fill="#fff" /></svg></button>
      <label class="search"><svg viewBox="0 0 32 32"><circle cx="16" cy="16" r="13" fill="none" stroke="#fff" stroke-width="3.500" /></svg><input placeholder="Scrivi qui per eseguire la ricerca" /><svg class="mic" viewBox="0 0 20 28"><rect x="6" y="2" width="8" height="15" rx="3" fill="none" stroke="#aaa" stroke-width="2" /><path d="M2 12v4a5 5 0 0 0 5 5h6a5 5 0 0 0 5-5v-4M10 21v5M5 26h10" fill="none" stroke="#aaa" stroke-width="2" /></svg></label>
      <button class="task view" aria-label="Task view"><svg viewBox="0 0 32 24"><path d="M5 3H1v18h4M27 3h4v18h-4" fill="none" stroke="#ddd" stroke-width="2" /><rect x="8" y="2" width="16" height="20" fill="none" stroke="#ddd" stroke-width="2" /></svg></button>
      <button class="task" aria-label="Edge"><svg viewBox="0 0 32 32"><path d="M2 15C3 6 9 1 17 1c9 0 13 7 13 13v4H11c0 6 5 8 10 8 3 0 6-1 8-2v6c-3 2-6 2-9 2C10 32 5 26 5 19c0-5 3-9 7-11-2 2-2 4-2 5h12c0-5-2-7-6-7C9 6 4 11 2 15z" fill="#0078d7" /></svg></button>
      <button class="task" aria-label="Explorer"><svg viewBox="0 0 32 30"><path d="M1 3h12l2 3h16v23H1z" fill="#ffe694" /><path d="M1 3h12l2 3H1z" fill="#f5b800" /><path d="M6 29V16h20v13h-5v-7H11v7z" fill="#3aa7e8" /></svg></button>
      <button class="task" aria-label="Store"><svg viewBox="0 0 32 36"><path d="M2 9h28v25l-28-3z" fill="#fff" /><path d="M10 9V6a6 6 0 0 1 12 0v3" fill="none" stroke="#fff" stroke-width="2" /><path d="M9 15h6v6H9zM17 15h7v6h-7zM9 22h6v6H9zM17 22h7v7h-7z" fill="#080808" /></svg></button>
      <button class="task" aria-label="Mail"><svg viewBox="0 0 36 30"><path d="M1 10L18 1l17 9v19H1z" fill="#fff" /><path d="M1 10h34L18 20z" fill="#080808" /><path d="M1 10l17 9 17-9" fill="none" stroke="#fff" stroke-width="2" /></svg></button>
      <button class="task active" aria-label="CalMAN"><svg viewBox="0 0 34 34"><circle cx="17" cy="17" r="15" fill="#000" stroke="#c0f" stroke-width="2" /><path d="M2 17A15 15 0 0 1 17 2" fill="none" stroke="#0d0" stroke-width="2" /><path d="M17 2A15 15 0 0 1 32 17" fill="none" stroke="#fb0" stroke-width="2" /><path d="M2 17a15 15 0 0 0 10 14" fill="none" stroke="#22f" stroke-width="2" /><text x="17" y="22" text-anchor="middle" font-size="14" font-weight="700" fill="#fff">CM</text></svg></button>
      <span class="grow"></span>
      <span class="tray">
        <svg viewBox="0 0 20 20"><path d="M2 14l8-8 8 8" fill="none" stroke="#fff" stroke-width="2" /></svg>
        <svg viewBox="0 0 28 24"><path d="M8 2h18v14H8M14 20h10M19 16v4M2 1v5h6V1M5 6v16" fill="none" stroke="#fff" stroke-width="2" /></svg>
        <svg viewBox="0 0 28 24"><path d="M2 4h5v16M12 5h14v14H12M14 7l8 10M22 7l-8 10" fill="none" stroke="#aaa" stroke-width="2" /></svg>
        <svg viewBox="0 0 28 24"><path d="M2 9h5l6-6v18l-6-6H2zM17 8c2 3 2 5 0 8M21 5c3 4 3 10 0 14" fill="none" stroke="#fff" stroke-width="2" /></svg>
        <time>01:31<br />21/10/2017</time>
        <svg class="bell" viewBox="0 0 38 36"><path d="M1 1h24v21H13l-6 6v-6H1z" fill="#fff" /><path d="M5 7h15M5 12h15M5 17h9" stroke="#222" stroke-width="2" /><circle cx="25" cy="24" r="11" fill="#333" stroke="#999" stroke-width="1.500" /><text x="25" y="30" text-anchor="middle" font-size="16" fill="#fff">1</text></svg>
      </span>
    </nav>
  </div>
</template>

<style>
body { background: #323232; }
.cie { position: relative; }
.cie-canvas { display: block; width: 100%; height: auto; }
.cie-marks { position: absolute; inset: 0; width: 100%; height: 100%; }
</style>

<style scoped>
.app { display: flex; flex-direction: column; min-height: 100vh; font-family: "Noto Sans", "Open Sans", sans-serif; color: #eee; background: #323232; font-size: 30px; line-height: 1; }
.app * { box-sizing: border-box; }
.defs { position: absolute; width: 0; height: 0; }
button { border: 0; padding: 0; margin: 0; font: inherit; color: inherit; cursor: pointer; display: flex; align-items: center; justify-content: center; }
button, svg { flex: none; }
h1, h2, p { margin: 0; font-weight: 400; }
.grow { flex: 1; }
.arrow { font-family: "DejaVu Sans", sans-serif; font-weight: 400; line-height: 1; }

.titlebar { display: flex; align-items: center; height: 34px; background: #fff; color: #000; font-size: 17px; }
.cm-icon { width: 24px; height: 24px; margin: 0 5px 0 2px; }
.win-title { flex: 1; }
.win-buttons { display: flex; }
.win-buttons button { width: 70px; height: 34px; background: none; }
.win-buttons svg { width: 16px; height: 16px; }

.brandbar { display: flex; align-items: flex-start; height: 52px; background: #2e2e2e; }
.brand { width: 271px; height: 43px; margin-left: 2px; border-radius: 0 0 5px 5px; background: linear-gradient(#b400b4, #3c003c); color: #fff; font: 700 48px/43px "Noto Sans", sans-serif; gap: 24px; }
.brand svg { width: 30px; height: 30px; }
.brand-line { flex: 1; height: 8px; margin: 18px 0 0 12px; background: linear-gradient(90deg, #ff00ff, #8a008a 60%, #4a104a); }

.tabbar { display: flex; align-items: flex-end; height: 46px; background: #2e2e2e; border-bottom: 1px solid #222; font-size: 16px; }
.expand { width: 40px; height: 42px; margin: 0 4px 3px 0; background: linear-gradient(#888, #555); border-radius: 0 7px 7px 0; }
.expand svg { width: 30px; height: 30px; }
.tab { width: 139px; height: 45px; background: #404040; border: 1px solid #777; border-bottom: 0; border-radius: 8px 0 0 0; }
.add { width: 51px; background: #5c5c5c; border-radius: 0 8px 0 0; }
.add span { width: 30px; height: 30px; line-height: 28px; border-radius: 50%; background: #474747; }
.device { height: 45px; margin-right: 10px; border-left: 7px solid #0d0; border-radius: 6px 6px 0 0; background: linear-gradient(#6c6c6c, #505050); font-size: 15px; line-height: 19px; text-align: left; justify-content: space-between; padding: 0 8px 0 6px; align-items: flex-start; }
.device span { white-space: nowrap; padding-top: 4px; }
.device svg { width: 30px; height: 30px; margin-top: 8px; }
.meter { width: 252px; padding-right: 4px; }
.source { width: 291px; }
.display { width: 202px; border-color: #dd0; margin-right: 5px; }
.tool { width: 50px; height: 43px; margin: 0 4px 2px 0; border-radius: 7px; background: linear-gradient(#7c7c7c, #555); border: 1px solid #888; }
.tool svg { width: 32px; height: 32px; }
.last { width: 40px; margin-right: 0; border-radius: 7px 0 0 7px; }

.work { display: grid; grid-template-columns: minmax(0, 1fr) 117px; flex: 1; }
.main { position: relative; background: #323232; }
.rule { height: 5px; background: #fc0; }
.left { margin: 0 2px 0 11px; }
.mid { margin: 0 379px 0 11px; }
.low { margin: 0 20px 0 11px; }
.vrule { background: #fc0; margin: 4px 0; }
.vrule.first { margin: 7px 0 0; }

.top { display: grid; grid-template-columns: minmax(0, 1601fr) 5px minmax(0, 2117fr); }
.titlerow { display: flex; align-items: center; height: 68px; padding-bottom: 4px; }
.titlerow h1 { display: flex; gap: 29px; align-items: center; margin-left: 24px; color: #fc0; font-size: 50px; white-space: nowrap; }
.burger { font: 30px/40px "DejaVu Sans", sans-serif; }
.session { margin: 4px 268px 0 auto; white-space: nowrap; }
.facts { display: grid; grid-template-columns: 328px 218px 327px 262px 252px 1fr; height: 46px; align-items: center; margin-left: 100px; padding-top: 3px; white-space: nowrap; line-height: 36px; }
.contrast { overflow: hidden; width: 315px; }
.chart { display: block; width: 100%; height: auto; overflow: visible; }
.chart text { font-size: 28px; fill: #ccc; }
.checker-chart text { font-size: 30px; }
.checker-chart .small { font-size: 28px; }
.chart .bright { font-size: 30px; fill: #eee; }

.head { display: flex; align-items: center; }
.gray-panel .head { height: 85px; padding-bottom: 5px; }
h2 { display: flex; color: #fc0; font-size: 46px; white-space: nowrap; padding-left: 36px; }
h2 b { width: 52px; font-weight: 400; }
.w-gray { width: 315px; }
.w-sat { width: 509px; }
.w-gamut { width: 530px; padding-left: 58px; }
.w-checker { width: 582px; padding-left: 203px; }
.icon-btn { width: 75px; height: 52px; margin-right: 9px; background: linear-gradient(#a8a8a8, #5c5c5c); }
.icon-btn svg { width: 36px; height: 36px; }
.btn { width: 227px; height: 54px; background: linear-gradient(#707070, #4c4c4c); border: 2px solid #2a2a2a; }
.select { position: relative; display: block; height: 66px; }
.select::after { content: ""; position: absolute; right: 14px; top: 28px; width: 22px; height: 13px; background: #000; clip-path: polygon(0 0, 100% 0, 50% 100%); }
select { appearance: none; width: 100%; height: 100%; padding: 0 8px; border: 3px solid #2a2a2a; border-radius: 0; background: linear-gradient(#707070, #4c4c4c); color: #eee; font: 36px "Noto Sans", sans-serif; }
.gray-select { width: 556px; margin-left: 9px; }
.level { margin-left: 14px; width: 160px; font-size: 94px; line-height: 76px; }
.stats { display: grid; grid-template-columns: auto 88px; line-height: 37px; text-align: right; }
.stats i { font-style: normal; }
.gray-panel .stats { width: 170px; grid-template-columns: 82px 88px; }

.checker-panel { padding: 5px 0 0 31px; }
.checker-body { display: grid; grid-template-columns: minmax(0, 1008fr) minmax(0, 1077fr); margin-bottom: -5px; }
.checker-body .chart { margin-top: -5px; }
.plot-title { position: absolute; top: 8px; right: 12px; font-size: 58px; line-height: 70px; }
.plot-title.sweep { right: 348px; top: 22px; font-size: 74px; line-height: 80px; }
.plot-title.gamut { right: 369px; top: 16px; font-size: 74px; line-height: 80px; }
.uv { position: absolute; left: 12px; bottom: 6px; display: flex; align-items: center; gap: 12px; color: #9cf; font-size: 46px; line-height: 50px; }
.uv input { appearance: none; width: 52px; height: 52px; margin: 0; background: linear-gradient(#909090, #5c5c5c); border: 7px solid #333; }
.checker-head { height: 79px; margin-left: -31px; }
.mini-btn { width: 49px; height: 49px; margin-left: 12px; background: linear-gradient(#848484, #5c5c5c); }
.custom { width: 166px; margin-left: 10px; font-size: 26px; line-height: 25px; white-space: nowrap; }
.flesh-select { width: 317px; }
.line-stats { display: grid; grid-template-columns: 217px 197px 150px; margin: 16px 0 0 54px; white-space: nowrap; }

.bottom { display: grid; grid-template-columns: minmax(0, 1746fr) 5px minmax(0, 1592fr) 5px minmax(0, 375fr); height: 820px; }
.pane .head { height: 76px; }
.pane-body { display: grid; }
.sweep-body { grid-template-columns: minmax(0, 865fr) minmax(0, 867fr); padding-left: 14px; }
.sweep-body .chart { padding-left: 10px; }
.gamut-body { grid-template-columns: minmax(0, 708fr) minmax(0, 854fr); padding-left: 30px; }
.sweep-select { width: 437px; }
.sweep-stats { width: 264px; margin-right: 78px; grid-template-columns: 1fr 88px; }
.gamut-select { width: 525px; margin-left: 9px; }
.gamut-stats { width: 156px; margin-right: 50px; grid-template-columns: 1fr 88px; }
.cms { padding: 5px 6px 0 19px; }
.cms-head { display: flex; gap: 1px; }
.colors { width: 268px; height: 60px; font-size: 34px; }
.close { flex: 1; height: 58px; background: #dc1010; }
.close svg { width: 36px; height: 30px; }
.cms-rule { margin: 99px 3px 0 -11px; }
.cms-report { display: flex; margin: 117px 0 0 36px; align-items: center; line-height: 31px; height: 52px; gap: 4px; font-size: 26px; white-space: nowrap; }
.cms .cie { width: 326px; margin: 46px 0 0 5px; }

.info { display: grid; grid-template-columns: 500fr 372fr 401fr 584fr 1063fr 802fr; height: 190px; }
.mode { padding: 24px 0 0 24px; font-size: 36px; }
.mode p { height: 52px; line-height: 52px; }
.mode .gold { margin-top: 22px; color: #fc0; font-size: 46px; }
.form { display: grid; grid-template-columns: 1fr 126px; grid-auto-rows: 50px; gap: 6px 19px; padding-top: 9px; text-align: right; line-height: 50px; font-size: 34px; white-space: nowrap; }
.rgb { grid-template-columns: 1fr 126px 126px 126px; column-gap: 12px; }
.col { text-align: center; }
input, textarea { border: 3px solid #a0a0a8; background: #232323; border-radius: 0; margin: 0; min-width: 0; color: #eee; }
.notes { margin: 9px 0 13px 24px; resize: none; }
.slot { display: grid; grid-template-columns: 290px 1fr; column-gap: 7px; padding: 12px 8px 0 13px; align-content: start; }
.notes-btn { height: 60px; margin-top: 39px; background: linear-gradient(#5a5a5a, #404040); font-size: 44px; font-weight: 700; color: #ddd; gap: 28px; }
.notes-btn svg { width: 34px; height: 34px; }
.slot-pick label { display: block; height: 34px; line-height: 38px; margin-left: 16px; }
.slot p { grid-column: 1 / 3; text-align: right; font-size: 27px; line-height: 26px; margin-top: 18px; white-space: nowrap; }

.float { position: absolute; height: 74px; width: 113px; background: linear-gradient(#a4a4a4, #585858); }
.stop { left: 42.4%; top: 789px; }
.read { left: 45.5%; top: 820px; width: 107px; }
.float svg { width: 50px; height: 50px; }

.side { display: flex; flex-direction: column; background: #000; color: #fc0; text-align: center; z-index: 1; font-weight: 700; }
.side > * { flex-shrink: 0; }
.help { height: 76px; margin: 0 2px 0 4px; background: linear-gradient(#888, #555); }
.help svg { width: 64px; height: 64px; }
.labels { display: flex; flex-direction: column; align-items: center; height: 187px; font-size: 36px; line-height: 61px; }
.labels .prp { font-weight: 400; font-size: 55px; line-height: 56px; margin-bottom: 6px; }
.nav { height: 56px; margin: 0 0 1px -12px; background: linear-gradient(#999, #606060); color: #111; font-size: 28px; gap: 6px; }
.nav svg { width: 38px; height: 38px; }
.post { height: 72px; background: linear-gradient(#747474, #4c4c4c); color: #ddd; font-size: 28px; line-height: 34px; margin: 0 0 0 2px; }
.post.wide { margin: 1px 0 2px -12px; }
.gap { height: 43px; }
.home { flex-direction: column; height: 86px; border-top: 6px solid #d8d8d8; background: linear-gradient(#444, #222); color: #d8d8d8; font-size: 26px; line-height: 30px; }
.home svg { width: 48px; height: 34px; }
.group { height: 44px; border: solid; border-width: 6px 0; background: #000; color: #fff; font-weight: 400; font-size: 26px; line-height: 31px; }
.amber { border-color: #a88000; }
.red { border-color: #b42200; }
.green { border-color: #1f8c1f; }
.zone { display: flex; flex-direction: column; padding-top: 2px; }
.amber-zone { height: 213px; background: #564300; }
.red-zone { height: 400px; background: #5a1000; }
.green-zone { height: 359px; background: #00420f; }
.gold-btn { height: 53px; margin-left: 2px; background: linear-gradient(#a87810, #8f5a08); border: 2px solid #333; color: #ddd; font-size: 28px; }
.item { height: 53px; margin: 0 0 3px 2px; background: linear-gradient(#6c6c6c, #4c4c4c); border: 2px solid #333; color: #eee; font-weight: 400; justify-content: flex-start; padding-left: 14px; gap: 9px; }
.item span, .item svg { width: 16px; height: 30px; }
.red-zone .post { margin-top: 20px; }
.item.lut { margin-bottom: 0; }
.green-zone .lut { margin-top: 12px; }
.tail { display: flex; flex: 1; justify-content: center; font-size: 36px; line-height: 108px; }

.strip { display: flex; height: 93px; background: linear-gradient(#4a4a4a, #1f1f1f); }
.swatch { width: 226px; margin-right: 2px; flex-direction: column; justify-content: flex-start; padding: 7px 7px 0; background: linear-gradient(#a0a0a0, #4c4c4c); border-radius: 6px; color: #222; font-size: 15px; font-weight: 700; line-height: 34px; }
.swatch.on { background: #2a2a2a; color: #fff; }
.chip { width: 209px; height: 55px; border-radius: 6px; border-top: 3px solid rgb(0 0 0 / 30%); }
.shutter { width: 73px; margin-right: 2px; display: flex; flex-direction: column; }
.shutter button { height: 28px; background: #888; border-radius: 6px 6px 0 0; }
.shutter svg { width: 24px; height: 24px; }
.shutter .pattern { height: 63px; margin-top: 1px; background: #777; border-radius: 0 0 6px 6px; }
.shutter .pattern svg { width: 46px; height: 46px; }
.transport { display: grid; grid-template-columns: repeat(6, 67px); grid-template-rows: 45px 44px; gap: 2px 1px; margin-right: 2px; }
.transport button { background: linear-gradient(#909090, #606060); color: #111; }
.transport svg { width: 32px; height: 32px; }
.transport .lit { background: linear-gradient(#fff, #aaa); }
.transport .dark { background: #444; color: #ddd; font-size: 16px; font-weight: 700; line-height: 20px; }
.transport .big { font-size: 20px; }
.transport .step { grid-column: span 3; font-size: 30px; font-weight: 700; justify-content: flex-start; gap: 30px; padding: 0 24px; }
.transport .next { justify-content: flex-end; gap: 36px; padding-right: 28px; }

.taskbar { display: flex; align-items: stretch; height: 60px; background: #080808; }
.task { width: 75px; background: none; }
.task svg { width: 34px; height: 34px; }
.task.view svg { width: 32px; height: 24px; }
.task.start { width: 71px; }
.task.start svg { width: 24px; height: 24px; }
.search { display: flex; align-items: center; width: 517px; background: #333; padding: 0 22px 0 15px; }
.search svg { width: 32px; height: 32px; }
.search input { flex: 1; border: 0; background: none; padding: 0 12px; font: 20px "Noto Sans", sans-serif; }
.search input::placeholder { color: #aaa; opacity: 1; }
.search .mic { width: 20px; height: 28px; }
.task.active { background: #383838; border-bottom: 3px solid #76b9ed; }
.tray { display: flex; align-items: center; gap: 10px; padding-right: 24px; font-size: 17px; line-height: 29px; text-align: center; }
.tray svg { width: 26px; height: 24px; }
.tray time { margin: 0 20px 0 8px; }
.tray .bell { width: 38px; height: 36px; }
</style>
